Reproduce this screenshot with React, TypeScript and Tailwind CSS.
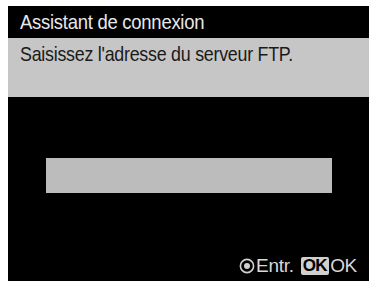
import React from "react";

// Camera-style dialog: connection wizard, FTP server entry
function DpadIcon() {
  return (
    <svg width="16" height="16" viewBox="0 0 16 16" className="mr-[1px]">
      <circle cx="8" cy="8" r="6.6" fill="none" stroke="#d0d0d0" strokeWidth="1.6" />
      <circle cx="8" cy="8" r="3" fill="#d0d0d0" />
    </svg>
  );
}

export default function App() {
  return (
    <div
      className="w-[373px] h-[281px] bg-white pl-[8px] pt-[6px] pr-[4px] overflow-hidden"
      style={{ fontFamily: "'Liberation Sans', Arial, sans-serif" }}
    >
      <div className="h-full bg-black flex flex-col">
        {/* title */}
        <div className="h-[32px] flex items-center px-[12px] text-[#e8e8e8] text-[21px] whitespace-nowrap">
          <span className="inline-block origin-left scale-x-[0.88] tracking-[-0.3px]">Assistant de connexion</span>
        </div>

        {/* prompt */}
        <div className="h-[59px] bg-[#c6c6c6] px-[12px] pt-[4px] text-[#1a1a1a] text-[21px] leading-[24px] whitespace-nowrap">
          <span className="inline-block origin-left scale-x-[0.85] tracking-[-0.3px]">Saisissez l'adresse du serveur FTP.</span>
        </div>

        {/* input field */}
        <div className="flex-1 flex flex-col">
          <div className="h-[61px]" />
          <div className="ml-[38px] w-[286px] h-[35px] bg-[#bcbcbc]" />
          <div className="flex-1 flex items-end justify-end pr-[12px] pb-[5px]">
            <div className="flex items-center text-[#d8d8d8] text-[19px] leading-[20px] whitespace-nowrap">
              <DpadIcon />
              <span className="tracking-[-0.3px]">Entr.</span>
              <span className="ml-[7px] bg-[#d0d0d0] text-black rounded-[2px] px-[2px] text-[17px] leading-[18px] font-bold tracking-[-0.5px]">
                OK
              </span>
              <span className="ml-[1px] tracking-[-0.3px]">OK</span>
            </div>
          </div>
        </div>
      </div>
    </div>
  );
}
